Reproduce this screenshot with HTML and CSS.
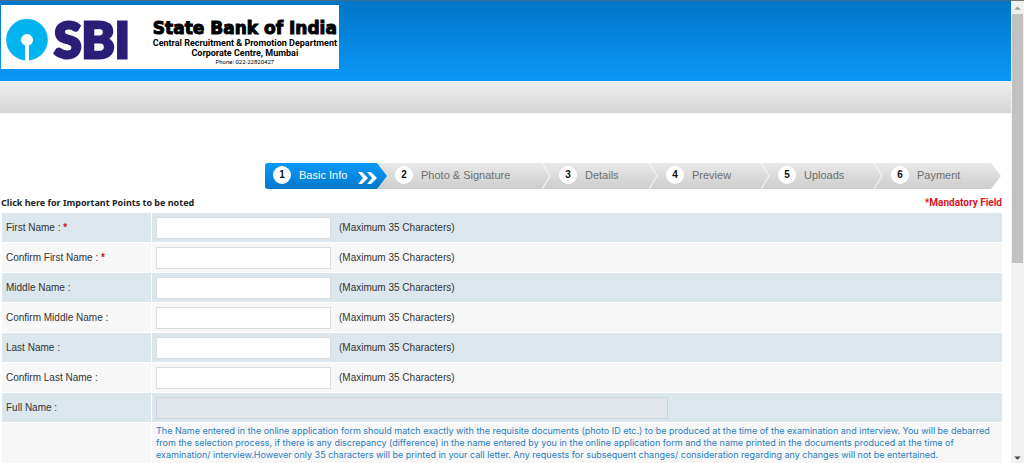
FILE: index.html
```html
<!DOCTYPE html>
<html lang="en">
<head>
<meta charset="utf-8">
<meta name="viewport" content="width=device-width, initial-scale=1">
<title>State Bank of India - Basic Info</title>
<link rel="stylesheet" href="styles.css">
</head>
<body>
<div class="page">
  <header class="banner">
    <div class="brand">
      <svg class="keyhole" viewBox="0 0 42 42" aria-hidden="true"><path d="M19 41.4A20.8 20.8 0 1 1 23 41.4V26.6A6 6 0 1 0 19 26.6Z" fill="#00b5ef"/></svg>
      <span class="sbi">SBI</span>
      <div class="org">
        <h1 class="org-name">State Bank of India</h1>
        <p class="org-line">Central Recruitment &amp; Promotion Department</p>
        <p class="org-line">Corporate Centre, Mumbai</p>
        <p class="org-phone">Phone: 022-22820427</p>
      </div>
    </div>
  </header>
  <div class="subbar"></div>
  <main class="content">
    <ol class="steps">
      <li class="step step-basic active"><span class="num">1</span><span class="name">Basic Info</span>
        <svg class="next" viewBox="0 0 20 12" aria-hidden="true"><path d="M0 0H4L10 6L4 12H0L5 6ZM9 0H13L19 6L13 12H9L14 6Z" fill="#fff"/></svg></li>
      <li class="step step-photo"><span class="num">2</span><span class="name">Photo &amp; Signature</span>
        <svg class="divider" viewBox="0 0 10 26" aria-hidden="true"><path d="M1 0L9 13L1 26" fill="none" stroke="#f4f4f4" stroke-width="1.2"/></svg></li>
      <li class="step step-details"><span class="num">3</span><span class="name">Details</span>
        <svg class="divider" viewBox="0 0 10 26" aria-hidden="true"><path d="M1 0L9 13L1 26" fill="none" stroke="#f4f4f4" stroke-width="1.2"/></svg></li>
      <li class="step step-preview"><span class="num">4</span><span class="name">Preview</span>
        <svg class="divider" viewBox="0 0 10 26" aria-hidden="true"><path d="M1 0L9 13L1 26" fill="none" stroke="#f4f4f4" stroke-width="1.2"/></svg></li>
      <li class="step step-uploads"><span class="num">5</span><span class="name">Uploads</span>
        <svg class="divider" viewBox="0 0 10 26" aria-hidden="true"><path d="M1 0L9 13L1 26" fill="none" stroke="#f4f4f4" stroke-width="1.2"/></svg></li>
      <li class="step step-payment"><span class="num">6</span><span class="name">Payment</span></li>
    </ol>
    <div class="notes">
      <a class="important" href="#">Click here for Important Points to be noted</a>
      <span class="mandatory">*Mandatory Field</span>
    </div>
    <table class="form">
      <tr><th><label for="first">First Name : <b class="req">*</b></label></th><td><div class="field"><input id="first" class="box" type="text" maxlength="35"><span>(Maximum 35 Characters)</span></div></td></tr>
      <tr><th><label for="first2">Confirm First Name : <b class="req">*</b></label></th><td><div class="field"><input id="first2" class="box" type="text" maxlength="35"><span>(Maximum 35 Characters)</span></div></td></tr>
      <tr><th><label for="middle">Middle Name :</label></th><td><div class="field"><input id="middle" class="box" type="text" maxlength="35"><span>(Maximum 35 Characters)</span></div></td></tr>
      <tr><th><label for="middle2">Confirm Middle Name :</label></th><td><div class="field"><input id="middle2" class="box" type="text" maxlength="35"><span>(Maximum 35 Characters)</span></div></td></tr>
      <tr><th><label for="last">Last Name :</label></th><td><div class="field"><input id="last" class="box" type="text" maxlength="35"><span>(Maximum 35 Characters)</span></div></td></tr>
      <tr><th><label for="last2">Confirm Last Name :</label></th><td><div class="field"><input id="last2" class="box" type="text" maxlength="35"><span>(Maximum 35 Characters)</span></div></td></tr>
      <tr><th><label for="full">Full Name :</label></th><td><div class="field"><input id="full" class="box wide" type="text" disabled></div></td></tr>
      <tr><th></th><td class="advice">The Name entered in the online application form should match exactly with the requisite documents (photo ID etc.) to be produced at the time of the examination and interview. You will be debarred from the selection process, if there is any discrepancy (difference) in the name entered by you in the online application form and the name printed in the documents produced at the time of examination/ interview.However only 35 characters will be printed in your call letter. Any requests for subsequent changes/ consideration regarding any changes will not be entertained.</td></tr>
    </table>
  </main>
</div>
<div class="scrollbar" aria-hidden="true">
  <svg class="arrow" viewBox="0 0 13 14"><path d="M3 9.500L6.500 6L10 9.500Z" fill="#999"/></svg>
  <div class="track"><div class="thumb"></div></div>
  <svg class="arrow" viewBox="0 0 13 14"><path d="M3 7L6.500 10.500L10 7Z" fill="#444"/></svg>
</div>
</body>
</html>
```
FILE: styles.css
```css
* { box-sizing: border-box; }
body {
  margin: 0;
  height: 100vh;
  display: flex;
  overflow: hidden;
  background: #fff;
  color: #333;
  font: 10px/12px Roboto, Arial, sans-serif;
}
.page { flex: 1; min-width: 0; overflow: hidden; }
.banner {
  padding: 4px 1px 12px;
  border-top: 1px solid #3c6c90;
  background: linear-gradient(#0076c6, #0c97f9);
}
.brand {
  display: flex;
  align-items: center;
  width: 338px;
  height: 64px;
  padding: 0 2px 0 5px;
  background: #fff;
}
.keyhole { width: 42px; height: 42px; margin-top: 6px; }
.sbi {
  margin: 3px 0 0 6px;
  color: #2a1e78;
  font: 900 50px/42px Lato, sans-serif;
  -webkit-text-stroke: 3px #2a1e78;
}
.org { margin-left: auto; padding-top: 8px; color: #000; text-align: center; white-space: nowrap; }
.org-name { margin: 0; font: bold 17px/20px "DejaVu Sans", sans-serif; -webkit-text-stroke: 1px #000; }
.org-line { margin: 0; font-weight: bold; font-size: 9px; line-height: 10px; }
.org-phone { margin: 0; font-size: 6px; line-height: 7px; }
.subbar { height: 33px; background: linear-gradient(#eee, #d6d6d6); border-bottom: 1px solid #f4f4f4; }
.content { padding: 49px 8px 0 1px; }
.steps {
  display: flex;
  width: 736px;
  margin: 0 2px 0 auto;
  padding: 0;
  list-style: none;
  background: linear-gradient(#e9e9e9, #cdcdcd);
  border-radius: 3px;
  clip-path: polygon(0 0, calc(100% - 10px) 0, 100% 50%, calc(100% - 10px) 100%, 0 100%);
  color: #6e6e6e;
  font-family: "Liberation Sans", Arial, sans-serif;
  font-size: 11px;
}
.step { display: flex; align-items: center; height: 26px; padding-left: 8px; white-space: nowrap; }
.step-basic { width: 122px; }
.step-photo { width: 164px; }
.step-details { width: 107px; }
.step-preview { width: 112px; }
.step-uploads { width: 113px; }
.active {
  background: linear-gradient(#0a9afa, #0079cb);
  border-radius: 3px;
  color: #fff;
  clip-path: polygon(0 0, calc(100% - 10px) 0, 100% 50%, calc(100% - 10px) 100%, 0 100%);
}
.name { padding-bottom: 3px; }
.num {
  width: 18px;
  height: 18px;
  margin: 0 8px 2px 0;
  border-radius: 50%;
  background: #fff;
  color: #111;
  font-size: 10px;
  font-weight: bold;
  line-height: 18px;
  text-align: center;
}
.next { width: 20px; height: 12px; margin: 3px 9px 0 auto; }
.divider { width: 10px; height: 26px; margin-left: auto; }
.notes { display: flex; justify-content: space-between; align-items: center; height: 23px; padding: 4px 1px 0 0; font-weight: bold; }
.important { color: #222; font-family: "Noto Sans", sans-serif; font-size: 9px; text-decoration: none; }
.mandatory, .req { color: #d9151f; }
.form { width: 100%; border-collapse: separate; border-spacing: 1px; font: 10px/12px "Liberation Sans", Arial, sans-serif; }
.form th { width: 149px; padding: 0 4px; text-align: left; font-weight: normal; background: #f7f7f7; }
.form td { height: 29px; padding: 0 4px; background: #f7f7f7; }
.form tr:nth-child(odd) > * { background: #dce6ed; }
.field { display: flex; align-items: center; gap: 8px; }
.box { width: 175px; height: 22px; margin: 0; padding: 0 4px; border: 1px solid #d8dcdf; background: #fff; font: inherit; }
.wide { width: 512px; background: #e0e6e9; border-color: #cdd3d6; }
.form .advice { height: 48px; padding: 2px 4px; color: #2b7dbd; font: 9px/12px Inter, Arial, sans-serif; vertical-align: top; }
.scrollbar { display: flex; flex-direction: column; width: 13px; background: #f1f1f1; border-top: 1px solid #777; }
.arrow { flex: none; width: 13px; height: 13px; }
.track { flex: 1; padding: 0 1px; }
.thumb { height: 57%; background: #c1c1c1; }
```
